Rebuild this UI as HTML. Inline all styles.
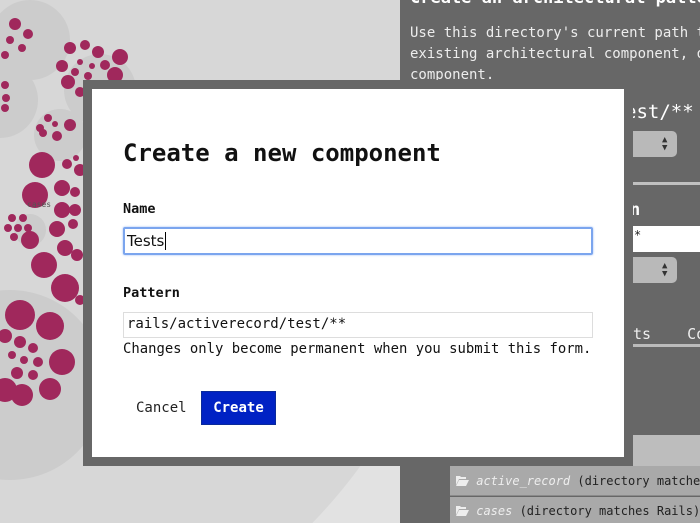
<!DOCTYPE html>
<html><head><meta charset="utf-8"><style>
*{margin:0;padding:0;box-sizing:border-box}
html,body{width:700px;height:523px;overflow:hidden}
body{position:relative;background:#e2e2e2;font-family:"DejaVu Sans Mono","Liberation Mono",monospace}
.abs{position:absolute}
.rp{left:400px;top:0;width:300px;height:523px;background:#676767;color:#ededed;font-size:14px;overflow:hidden}
.modal{left:83px;top:80px;width:550px;height:386px;background:#676767}
.inner{left:92px;top:89px;width:532px;height:368px;background:#fff;color:#111}
.row{overflow:hidden;white-space:nowrap;background:#a9a9a9;font-size:12px;color:#222}
</style></head><body>
<svg class="abs" style="left:0;top:0" width="400" height="523">
<circle cx="-60" cy="160" r="520" fill="#d7d7d7"/>
<circle cx="30" cy="40" r="40" fill="#cccccc"/>
<circle cx="100" cy="90" r="36" fill="#cccccc"/>
<circle cx="60" cy="135" r="26" fill="#cccccc"/>
<circle cx="30" cy="230" r="16" fill="#cccccc"/>
<circle cx="10" cy="385" r="95" fill="#cccccc"/>
<circle cx="0" cy="100" r="38" fill="#cccccc"/>
<g fill="#a0285c">
<circle cx="15" cy="24" r="6"/><circle cx="28" cy="34" r="5"/><circle cx="10" cy="40" r="4"/><circle cx="22" cy="48" r="4"/><circle cx="5" cy="55" r="4"/>
<circle cx="70" cy="48" r="6"/><circle cx="85" cy="45" r="5"/><circle cx="98" cy="52" r="6"/><circle cx="120" cy="57" r="8"/><circle cx="62" cy="66" r="6"/><circle cx="80" cy="62" r="3"/><circle cx="92" cy="66" r="3"/><circle cx="105" cy="65" r="5"/><circle cx="75" cy="72" r="4"/><circle cx="88" cy="76" r="4"/><circle cx="68" cy="82" r="7"/><circle cx="115" cy="75" r="8"/><circle cx="80" cy="92" r="5"/>
<circle cx="5" cy="85" r="4"/><circle cx="6" cy="98" r="4"/><circle cx="5" cy="108" r="4"/>
<circle cx="48" cy="118" r="4"/><circle cx="40" cy="128" r="4"/><circle cx="55" cy="124" r="3"/><circle cx="70" cy="125" r="6"/><circle cx="43" cy="133" r="4"/><circle cx="57" cy="136" r="5"/>
<circle cx="42" cy="165" r="13"/><circle cx="67" cy="164" r="5"/><circle cx="76" cy="158" r="3"/><circle cx="80" cy="170" r="6"/>
<circle cx="35" cy="195" r="13"/><circle cx="62" cy="188" r="8"/><circle cx="75" cy="192" r="5"/><circle cx="62" cy="210" r="8"/><circle cx="75" cy="210" r="6"/>
<circle cx="12" cy="218" r="4"/><circle cx="23" cy="218" r="4"/><circle cx="18" cy="228" r="4"/><circle cx="8" cy="228" r="4"/><circle cx="28" cy="228" r="4"/><circle cx="14" cy="237" r="4"/><circle cx="30" cy="240" r="9"/>
<circle cx="57" cy="229" r="8"/><circle cx="73" cy="224" r="5"/><circle cx="65" cy="248" r="8"/><circle cx="44" cy="265" r="13"/><circle cx="77" cy="255" r="6"/>
<circle cx="65" cy="288" r="14"/><circle cx="80" cy="300" r="5"/>
<circle cx="20" cy="315" r="15"/><circle cx="50" cy="326" r="14"/><circle cx="5" cy="336" r="7"/><circle cx="20" cy="342" r="6"/><circle cx="33" cy="348" r="5"/><circle cx="12" cy="355" r="4"/><circle cx="24" cy="360" r="4"/><circle cx="38" cy="362" r="5"/><circle cx="62" cy="362" r="13"/><circle cx="17" cy="373" r="6"/><circle cx="33" cy="375" r="5"/><circle cx="5" cy="390" r="12"/><circle cx="22" cy="395" r="11"/><circle cx="50" cy="389" r="11"/>
</g>
<text x="27" y="207" font-size="8" fill="#555" font-family="DejaVu Sans Mono,monospace">cases</text>
</svg>
<div class="abs rp">
<div class="abs" style="left:10px;top:-12px;font-weight:bold;font-size:17px;color:#fff;white-space:nowrap">Create an architectural pattern</div>
<div class="abs" style="left:10px;top:23px;line-height:21px;white-space:nowrap">Use this directory's current path to<br>existing architectural component, or<br>component.</div>
<div class="abs" style="left:225px;top:101px;font-size:19px;color:#fff">est/**</div>
<div class="abs" style="left:220px;top:131px;width:57px;height:26px;background:#b9b9b9;border-radius:5px"></div>
<div class="abs" style="left:262px;top:136px;font-size:9px;color:#333;line-height:8px">▲<br>▼</div>
<div class="abs" style="left:233px;top:182px;width:67px;height:3px;background:#c0c0c0"></div>
<div class="abs" style="left:230px;top:200px;font-size:17px;color:#fff;font-weight:bold">n</div>
<div class="abs" style="left:233px;top:226px;width:67px;height:26px;background:#fff;color:#222;font-size:12px;padding:2px 1px">*</div>
<div class="abs" style="left:220px;top:257px;width:57px;height:26px;background:#b9b9b9;border-radius:5px"></div>
<div class="abs" style="left:262px;top:262px;font-size:9px;color:#333;line-height:8px">▲<br>▼</div>
<div class="abs" style="left:233px;top:325px;font-size:15px;color:#eee;white-space:nowrap">ts&nbsp;&nbsp;&nbsp;&nbsp;Co</div>
<div class="abs" style="left:233px;top:344px;width:67px;height:3px;background:#bbb"></div>
<div class="abs" style="left:233px;top:435px;width:67px;height:31px;background:#bdbdbd"></div>
<div class="abs row" style="left:50px;top:466px;width:250px;height:30px;border-bottom:1px solid #8a8a8a;padding:8px 6px;line-height:14px"><svg width="13" height="11" viewBox="0 0 13 11" style="vertical-align:-1px"><path d="M0 1h4l1 1h5v2H3L0 10z M3 5h10l-3 6H0z" fill="#eee"/></svg> <i style="color:#eee">active_record</i> (directory matches Rails)</div>
<div class="abs row" style="left:50px;top:497px;width:250px;height:26px;padding:7px 6px;line-height:14px"><svg width="13" height="11" viewBox="0 0 13 11" style="vertical-align:-1px"><path d="M0 1h4l1 1h5v2H3L0 10z M3 5h10l-3 6H0z" fill="#eee"/></svg> <i style="color:#eee">cases</i> (directory matches Rails)</div>
</div>
<div class="abs modal"></div>
<div class="abs inner">
<div class="abs" style="left:31px;top:50px;font-size:24px;font-weight:bold;white-space:nowrap">Create a new component</div>
<div class="abs" style="left:31px;top:112px;font-size:13.5px;font-weight:bold">Name</div>
<div class="abs" style="left:31px;top:138px;width:470px;height:28px;border:2px solid #7ba5ee;border-radius:2px;box-shadow:0 0 2px #9bbcf5;font-size:15px;padding:3px 2px;font-family:'DejaVu Sans',sans-serif">Tests<span style="border-left:1px solid #000;margin-left:1px"></span></div>
<div class="abs" style="left:31px;top:196px;font-size:13.5px;font-weight:bold">Pattern</div>
<div class="abs" style="left:31px;top:223px;width:470px;height:26px;border:1px solid #ddd;font-size:14px;padding:3px 3px;white-space:nowrap">rails/activerecord/test/**</div>
<div class="abs" style="left:31px;top:252px;font-size:13.9px;white-space:nowrap">Changes only become permanent when you submit this form.</div>
<div class="abs" style="left:44px;top:311px;font-size:14px;color:#222">Cancel</div>
<div class="abs" style="left:109px;top:302px;width:75px;height:34px;background:#0022c4;border:1px solid #0a2a9a;color:#fff;font-size:14px;font-weight:bold;text-align:center;line-height:32px">Create</div>
</div>
</body></html>
